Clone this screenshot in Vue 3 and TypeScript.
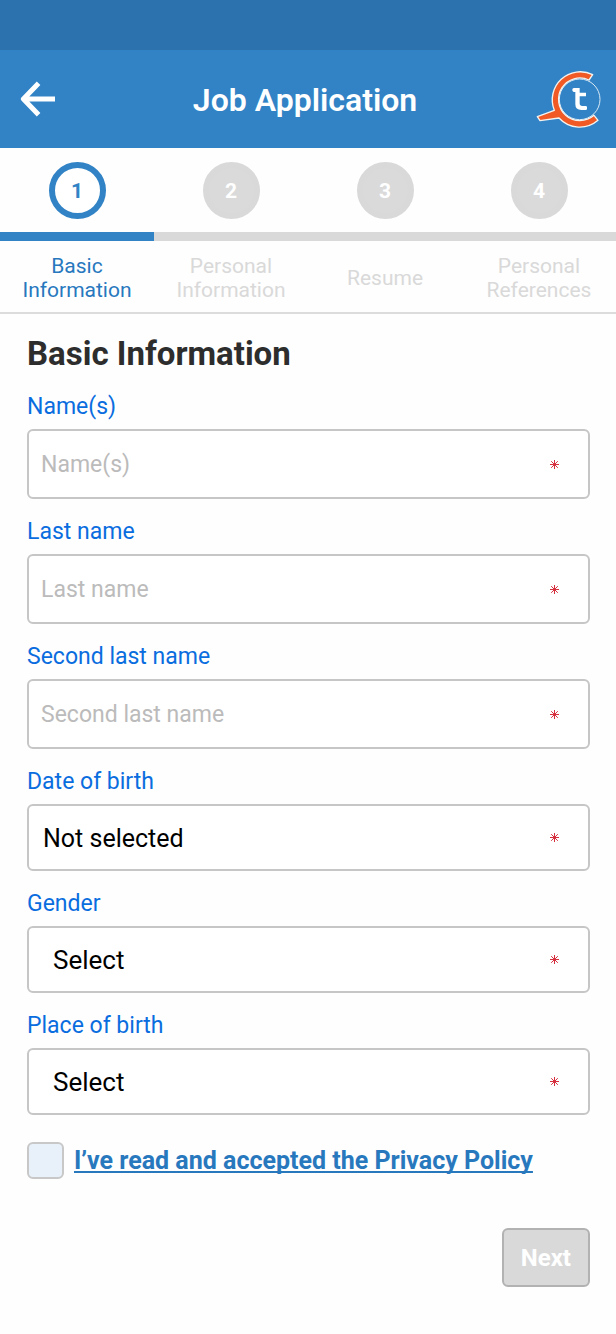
<script setup lang="ts">
import { reactive, ref } from 'vue'

interface Step {
  label: string
}

interface Field {
  id: string
  label: string
  kind: 'text' | 'date' | 'select'
  options?: string[]
}

const steps: Step[] = [
  { label: 'Basic Information' },
  { label: 'Personal Information' },
  { label: 'Resume' },
  { label: 'Personal References' },
]
const current = ref(0)

const fields: Field[] = [
  { id: 'name', label: 'Name(s)', kind: 'text' },
  { id: 'last-name', label: 'Last name', kind: 'text' },
  { id: 'second-last-name', label: 'Second last name', kind: 'text' },
  { id: 'birth-date', label: 'Date of birth', kind: 'date' },
  { id: 'gender', label: 'Gender', kind: 'select', options: ['Select'] },
  { id: 'birth-place', label: 'Place of birth', kind: 'select', options: ['Select'] },
]

const values = reactive<Record<string, string>>({
  name: '',
  'last-name': '',
  'second-last-name': '',
  gender: 'Select',
  'birth-place': 'Select',
})
const accepted = ref(false)
</script>

<template>
  <div class="page">
    <div class="status-bar"></div>
    <header class="app-bar">
      <button class="back" type="button" aria-label="Back">
        <svg width="36" height="36" viewBox="0 0 36 36" fill="none" stroke="#fff" stroke-width="5">
          <path d="M18.6 2.2 3.4 18l15.2 15.8M4 18h31" stroke-linejoin="round" />
        </svg>
      </button>
      <h1 class="title">Job Application</h1>
      <svg class="logo" width="66" height="60" viewBox="48 56 198 180" aria-hidden="true">
        <circle cx="179" cy="147" r="61" fill="#3183c6" stroke="#d9e9f5" stroke-width="3" />
        <path
          d="M218 73A84 84 0 0 0 103 180L52 199L60 211L117 203A84 84 0 0 0 234 210L222 195A64 64 0 1 1 207 89Z"
          fill="#f15a24" stroke="#f3f3f0" stroke-width="4" stroke-linejoin="round"
        />
        <path
          d="M157 117Q158 113 163 113H179V127H198V138H179V159Q179 167 187 167H197Q201 167 201 171V175Q201 179 197 179H184Q166 179 166 162V125H161Q156 123 157 117Z"
          fill="#fff"
        />
      </svg>
    </header>

    <nav class="steps" aria-label="Application steps">
      <div v-for="(step, i) in steps" :key="step.label" class="step" :class="{ active: i === current }">
        <div class="marker"><span class="circle">{{ i + 1 }}</span></div>
        <div class="bar"></div>
        <div class="step-label">{{ step.label }}</div>
      </div>
    </nav>

    <form class="form" @submit.prevent>
      <h2 class="heading">Basic Information</h2>
      <div v-for="field in fields" :key="field.id" class="field">
        <label class="label" :for="field.id">{{ field.label }}</label>
        <div class="box" :class="field.kind">
          <input
            v-if="field.kind === 'text'"
            :id="field.id"
            v-model="values[field.id]"
            class="control"
            type="text"
            :placeholder="field.label"
          />
          <button v-else-if="field.kind === 'date'" :id="field.id" class="control" type="button">Not selected</button>
          <select v-else :id="field.id" v-model="values[field.id]" class="control">
            <option v-for="option in field.options" :key="option">{{ option }}</option>
          </select>
          <svg class="required" width="9" height="9" viewBox="0 0 9 9" stroke="#d6303f" aria-hidden="true">
            <path d="M4.5 0v9M0 4.5h9M1.2 1.2l6.6 6.6M7.8 1.2 1.2 7.8" stroke-width="1" />
            <circle cx="4.5" cy="4.5" r="1.2" fill="#d6303f" />
          </svg>
        </div>
      </div>

      <div class="consent">
        <input id="privacy" v-model="accepted" class="check" type="checkbox" aria-labelledby="privacy-text" />
        <a id="privacy-text" class="policy" href="#privacy">I’ve read and accepted the Privacy Policy</a>
      </div>

      <div class="actions">
        <button class="next" type="submit">Next</button>
      </div>
    </form>
  </div>
</template>

<style>
body {
  margin: 0;
  background: #fefefe;
}
</style>

<style scoped>
.page {
  font-family: Roboto, "Liberation Sans", sans-serif;
  color: #2d2d2d;
}

.status-bar {
  height: 50px;
  background: #2b72ae;
}

.app-bar {
  display: flex;
  align-items: center;
  justify-content: space-between;
  height: 98px;
  padding: 0 14px 0 20px;
  box-sizing: border-box;
  background: #3183c6;
}

.back {
  display: flex;
  width: 54px;
  padding: 0;
  border: 0;
  background: none;
}

.title {
  margin: 0;
  padding-top: 2px;
  font-size: 32px;
  line-height: 40px;
  font-weight: 600;
  color: #fff;
}

.logo {
  flex: none;
}

.steps {
  display: grid;
  grid-template-columns: repeat(4, 1fr);
  border-bottom: 2px solid #dcdcdc;
}

.step {
  display: flex;
  flex-direction: column;
  color: #d9d9d9;
}

.marker {
  display: flex;
  justify-content: center;
  padding: 14px 0 13px;
}

.circle {
  width: 57px;
  height: 57px;
  box-sizing: border-box;
  border: 6px solid #d9d9d9;
  border-radius: 50%;
  background: #dadada;
  color: #fff;
  font-size: 21px;
  line-height: 46px;
  font-weight: 700;
  text-align: center;
}

.bar {
  height: 9px;
  background: #d9d9d9;
}

.step-label {
  display: flex;
  flex: 1;
  align-items: center;
  justify-content: center;
  min-height: 71px;
  padding: 3px 12px 0;
  box-sizing: border-box;
  font-size: 21px;
  line-height: 24px;
  text-align: center;
}

.active {
  color: #2878be;
}

.active .circle {
  border-color: #3183c6;
  background: #fff;
  color: #3183c6;
}

.active .bar {
  background: #3183c6;
}

.form {
  padding: 20px 26px 47px 27px;
}

.heading {
  margin: 0 0 18px;
  font-size: 33px;
  line-height: 40px;
  font-weight: 700;
}

.field {
  margin-bottom: 18px;
}

.label {
  display: block;
  margin-bottom: 7px;
  font-size: 23px;
  line-height: 30px;
  color: #0a6ddf;
}

.box {
  display: flex;
  align-items: center;
  height: 67px;
  padding-right: 29px;
  box-sizing: border-box;
  border: 2px solid #c6c6c6;
  border-radius: 6px;
  background: #fff;
}

.box.text {
  height: 70px;
}

.control {
  flex: 1;
  min-width: 0;
  height: 100%;
  margin: 0;
  padding: 0 12px;
  border: 0;
  outline: 0;
  appearance: none;
  background: none;
  font-family: inherit;
  font-size: 23px;
  color: #000;
  text-align: left;
}

.control::placeholder {
  color: #bbb;
  opacity: 1;
}

.date .control {
  padding: 2px 14px 0;
  font-size: 25px;
}

.select .control {
  padding: 0 24px;
  font-size: 26px;
}

.required {
  flex: none;
}

.consent {
  display: flex;
  align-items: center;
  gap: 10px;
  padding-top: 9px;
}

.check {
  flex: none;
  width: 37px;
  height: 37px;
  margin: 0;
  appearance: none;
  border: 2px solid #c8c8c8;
  border-radius: 6px;
  background: #e8f1f9;
}

.check:checked {
  background: #3183c6;
}

.policy {
  font-size: 25px;
  line-height: 30px;
  font-weight: 700;
  color: #2878be;
  text-decoration-thickness: 2px;
  text-decoration-skip-ink: none;
  text-underline-offset: 2px;
}

.actions {
  display: flex;
  justify-content: flex-end;
  margin-top: 49px;
}

.next {
  min-width: 88px;
  height: 59px;
  padding: 0 17px;
  border: 2px solid #b2b2b2;
  border-radius: 6px;
  background: #d9d9d9;
  color: #fff;
  font-family: inherit;
  font-size: 24px;
  font-weight: 700;
}
</style>
